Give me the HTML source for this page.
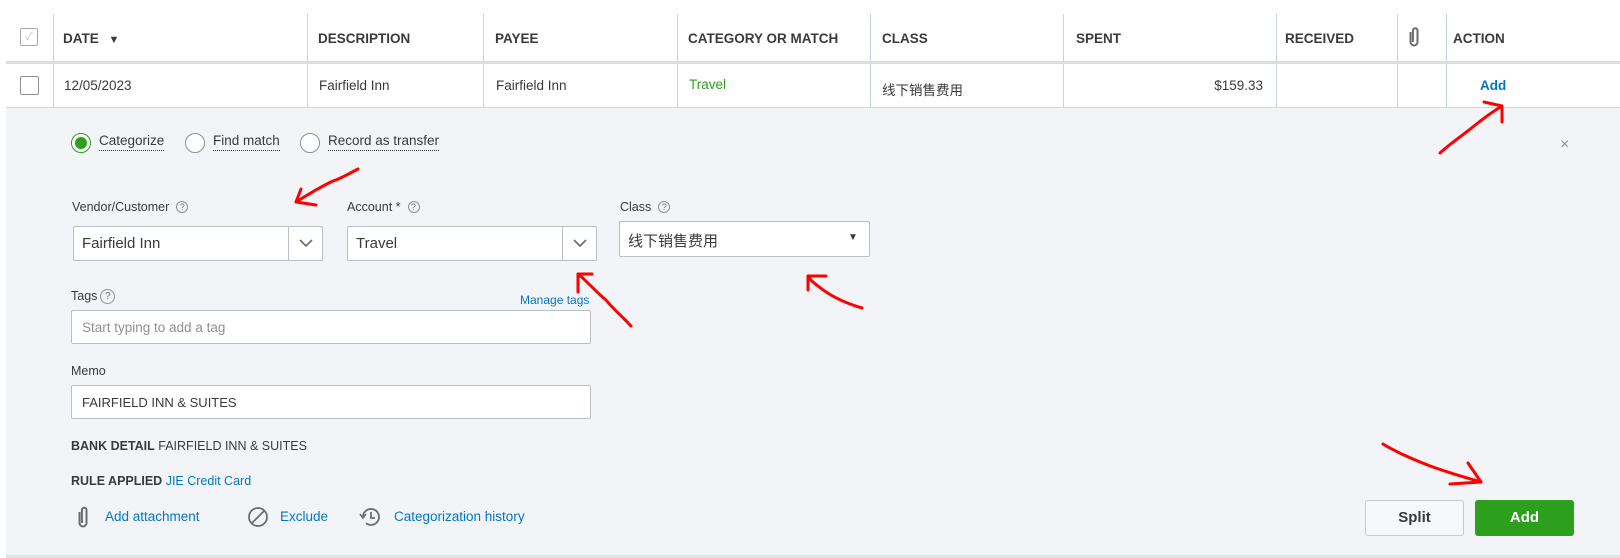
<!DOCTYPE html>
<html><head><meta charset="utf-8"><style>
*{box-sizing:border-box;margin:0;padding:0}
body{width:1620px;height:558px;background:#fff;position:relative;overflow:hidden;font-family:"Liberation Sans","Noto Sans CJK SC",sans-serif;color:#393a3d}
.a{position:absolute;white-space:nowrap}
.h{font-weight:bold;font-size:13.5px;color:#393a3d;top:31px}
.vl{position:absolute;width:1px;background:#c9d3e0}
.r{font-size:13.5px;color:#393a3d;top:78px}
.lbl{font-size:12.5px;color:#393a3d}
.q{display:inline-block;width:12px;height:12px;border:1px solid #8d9096;border-radius:50%;font-size:9px;line-height:10px;text-align:center;color:#6b6c72;margin-left:7px;vertical-align:1px}
.inp{position:absolute;background:#fff;border:1px solid #babec5;border-radius:2px}
.link{color:#0077c5}
.rad{position:absolute;width:20px;height:20px;border:1px solid #8d9096;border-radius:50%;background:#fff}
.rl{font-size:13.5px;color:#393a3d;border-bottom:1px dotted #393a3d;top:133px;padding-bottom:2px}
</style></head><body>
<div class="a" style="left:20px;top:28px;width:18px;height:18px;border:1px solid #a7a9ad;border-radius:2px;background:#fff;color:#c4c6ca;font-size:11px;text-align:center;line-height:16px">✓</div>
<div class="vl" style="left:53px;top:14px;height:94px"></div>
<div class="vl" style="left:307px;top:14px;height:94px"></div>
<div class="vl" style="left:483px;top:14px;height:94px"></div>
<div class="vl" style="left:677px;top:14px;height:94px"></div>
<div class="vl" style="left:870px;top:14px;height:94px"></div>
<div class="vl" style="left:1063px;top:14px;height:94px"></div>
<div class="vl" style="left:1276px;top:14px;height:94px"></div>
<div class="vl" style="left:1397px;top:14px;height:94px"></div>
<div class="vl" style="left:1446px;top:14px;height:94px"></div>
<div class="a" style="left:6px;top:61px;width:1614px;height:3px;background:#dcdde0"></div>
<div class="a h" style="left:63px">DATE <span style="font-size:11px;margin-left:6px">▼</span></div>
<div class="a h" style="left:318px">DESCRIPTION</div>
<div class="a h" style="left:495px">PAYEE</div>
<div class="a h" style="left:688px">CATEGORY OR MATCH</div>
<div class="a h" style="left:882px">CLASS</div>
<div class="a h" style="left:1076px">SPENT</div>
<div class="a h" style="left:1285px">RECEIVED</div>
<svg class="a" style="left:1407px;top:26px" width="14" height="22" viewBox="0 0 14 22"><path d="M3.5 6v10a3.5 3.5 0 0 0 7 0V4.5a2.3 2.3 0 0 0-4.6 0V16" fill="none" stroke="#6b6c72" stroke-width="2"/></svg>
<div class="a h" style="left:1453px">ACTION</div>
<div class="a" style="left:20px;top:76px;width:19px;height:19px;border:1px solid #8d9096;border-radius:2px;background:#fff"></div>
<div class="a r" style="left:64px">12/05/2023</div>
<div class="a r" style="left:319px">Fairfield Inn</div>
<div class="a r" style="left:496px">Fairfield Inn</div>
<div class="a r" style="left:689px;color:#2ca01c;top:77px">Travel</div>
<div class="a r" style="left:882px;top:79px">线下销售费用</div>
<div class="a r" style="left:1200px;width:63px;text-align:right">$159.33</div>
<div class="a" style="left:1480px;top:78px;font-weight:bold;font-size:13.5px;color:#0077c5">Add</div>
<div class="a" style="left:6px;top:107px;width:1614px;height:449px;background:#f3f4f8;border-top:1px solid #d4d7dc"></div>
<div class="a" style="left:6px;top:555px;width:1614px;height:3px;background:#e2e3e6"></div>
<div class="rad" style="left:71px;top:133px;border-color:#2ca01c"><div style="position:absolute;left:3px;top:3px;width:12px;height:12px;border-radius:50%;background:#2ca01c"></div></div>
<div class="a rl" style="left:99px">Categorize</div>
<div class="rad" style="left:185px;top:133px"></div>
<div class="a rl" style="left:213px">Find match</div>
<div class="rad" style="left:300px;top:133px"></div>
<div class="a rl" style="left:328px">Record as transfer</div>
<div class="a" style="left:1560px;top:136px;font-size:16px;color:#8d9096">×</div>
<div class="a lbl" style="left:72px;top:200px">Vendor/Customer<span class="q">?</span></div>
<div class="inp" style="left:73px;top:226px;width:250px;height:35px"><div class="a" style="left:8px;top:8px;font-size:15px;color:#393a3d">Fairfield Inn</div><div class="a" style="left:214px;top:0;width:1px;height:33px;background:#babec5"></div><svg class="a" style="left:225px;top:11px" width="14" height="10"><path d="M1 2l6 6 6-6" fill="none" stroke="#6b6c72" stroke-width="1.6"/></svg></div>
<div class="a lbl" style="left:347px;top:200px">Account *<span class="q">?</span></div>
<div class="inp" style="left:347px;top:226px;width:250px;height:35px"><div class="a" style="left:8px;top:8px;font-size:15px;color:#393a3d">Travel</div><div class="a" style="left:214px;top:0;width:1px;height:33px;background:#babec5"></div><svg class="a" style="left:225px;top:11px" width="14" height="10"><path d="M1 2l6 6 6-6" fill="none" stroke="#6b6c72" stroke-width="1.6"/></svg></div>
<div class="a lbl" style="left:620px;top:200px">Class<span class="q">?</span></div>
<div class="inp" style="left:619px;top:221px;width:251px;height:36px"><div class="a" style="left:8px;top:8px;font-size:15px;color:#393a3d">线下销售费用</div><div class="a" style="left:228px;top:10px;font-size:10px;color:#393a3d">▼</div></div>
<div class="a lbl" style="left:71px;top:289px">Tags<span class="q" style="width:15px;height:15px;line-height:13px;font-size:10px;margin-left:3px">?</span></div>
<div class="a link" style="left:520px;top:293px;font-size:12px">Manage tags</div>
<div class="inp" style="left:71px;top:310px;width:520px;height:34px"><div class="a" style="left:10px;top:9px;font-size:13.5px;color:#8d9096">Start typing to add a tag</div></div>
<div class="a lbl" style="left:71px;top:364px">Memo</div>
<div class="inp" style="left:71px;top:385px;width:520px;height:34px"><div class="a" style="left:10px;top:9px;font-size:13px;color:#393a3d">FAIRFIELD INN &amp; SUITES</div></div>
<div class="a" style="left:71px;top:439px;font-size:12.5px"><b>BANK DETAIL</b> FAIRFIELD INN &amp; SUITES</div>
<div class="a" style="left:71px;top:474px;font-size:12.5px"><b>RULE APPLIED</b> <span class="link">JIE Credit Card</span></div>
<svg class="a" style="left:76px;top:505px" width="14" height="24" viewBox="0 0 14 24"><path d="M3.5 7v11a3.5 3.5 0 0 0 7 0V5a2.3 2.3 0 0 0-4.6 0V18" fill="none" stroke="#6b6c72" stroke-width="2"/></svg>
<div class="a link" style="left:105px;top:509px;font-size:13.5px">Add attachment</div>
<svg class="a" style="left:247px;top:506px" width="22" height="22"><circle cx="11" cy="11" r="9" fill="none" stroke="#6b6c72" stroke-width="1.8"/><path d="M5 17L17 5" stroke="#6b6c72" stroke-width="1.8"/></svg>
<div class="a link" style="left:280px;top:509px;font-size:13.5px">Exclude</div>
<svg class="a" style="left:359px;top:506px" width="22" height="22"><path d="M4 11a8 8 0 1 1 3 6.2" fill="none" stroke="#6b6c72" stroke-width="1.8"/><path d="M1 8l3 4 3-4" fill="none" stroke="#6b6c72" stroke-width="1.6"/><path d="M12 6v6h4" fill="none" stroke="#6b6c72" stroke-width="1.8"/></svg>
<div class="a link" style="left:394px;top:509px;font-size:13.5px">Categorization history</div>
<div class="a" style="left:1365px;top:500px;width:99px;height:36px;border:1px solid #c8cace;border-radius:3px;background:#f7f8fa;text-align:center;line-height:34px;font-size:15px;font-weight:bold;color:#393a3d">Split</div>
<div class="a" style="left:1475px;top:500px;width:99px;height:36px;border-radius:3px;background:#2ca01c;text-align:center;line-height:36px;font-size:15px;font-weight:bold;color:#fff">Add</div>
<svg class="a" style="left:0;top:0" width="1620" height="558" fill="none" stroke="#f00" stroke-width="3" stroke-linecap="round" stroke-linejoin="round">
<path d="M358 169C348 174 342 178 333 181C322 186 312 192 296 202M296 202L301 189M296 202L316 205"/>
<path d="M631 326C622 316 614 310 606 300C596 292 588 282 578 274M578 274V292M578 274H592"/>
<path d="M862 308C845 303 830 296 818 286C814 283 810 280 808 276M808 276V290M808 276H826"/>
<path d="M1440 153C1452 142 1462 136 1474 126C1484 118 1492 112 1502 106M1502 106V122M1502 106L1484 102"/>
<path d="M1383 444C1396 452 1410 458 1425 464C1440 470 1460 476 1481 482M1481 482L1468 463M1481 482L1450 484"/>
</svg>
</body></html>
